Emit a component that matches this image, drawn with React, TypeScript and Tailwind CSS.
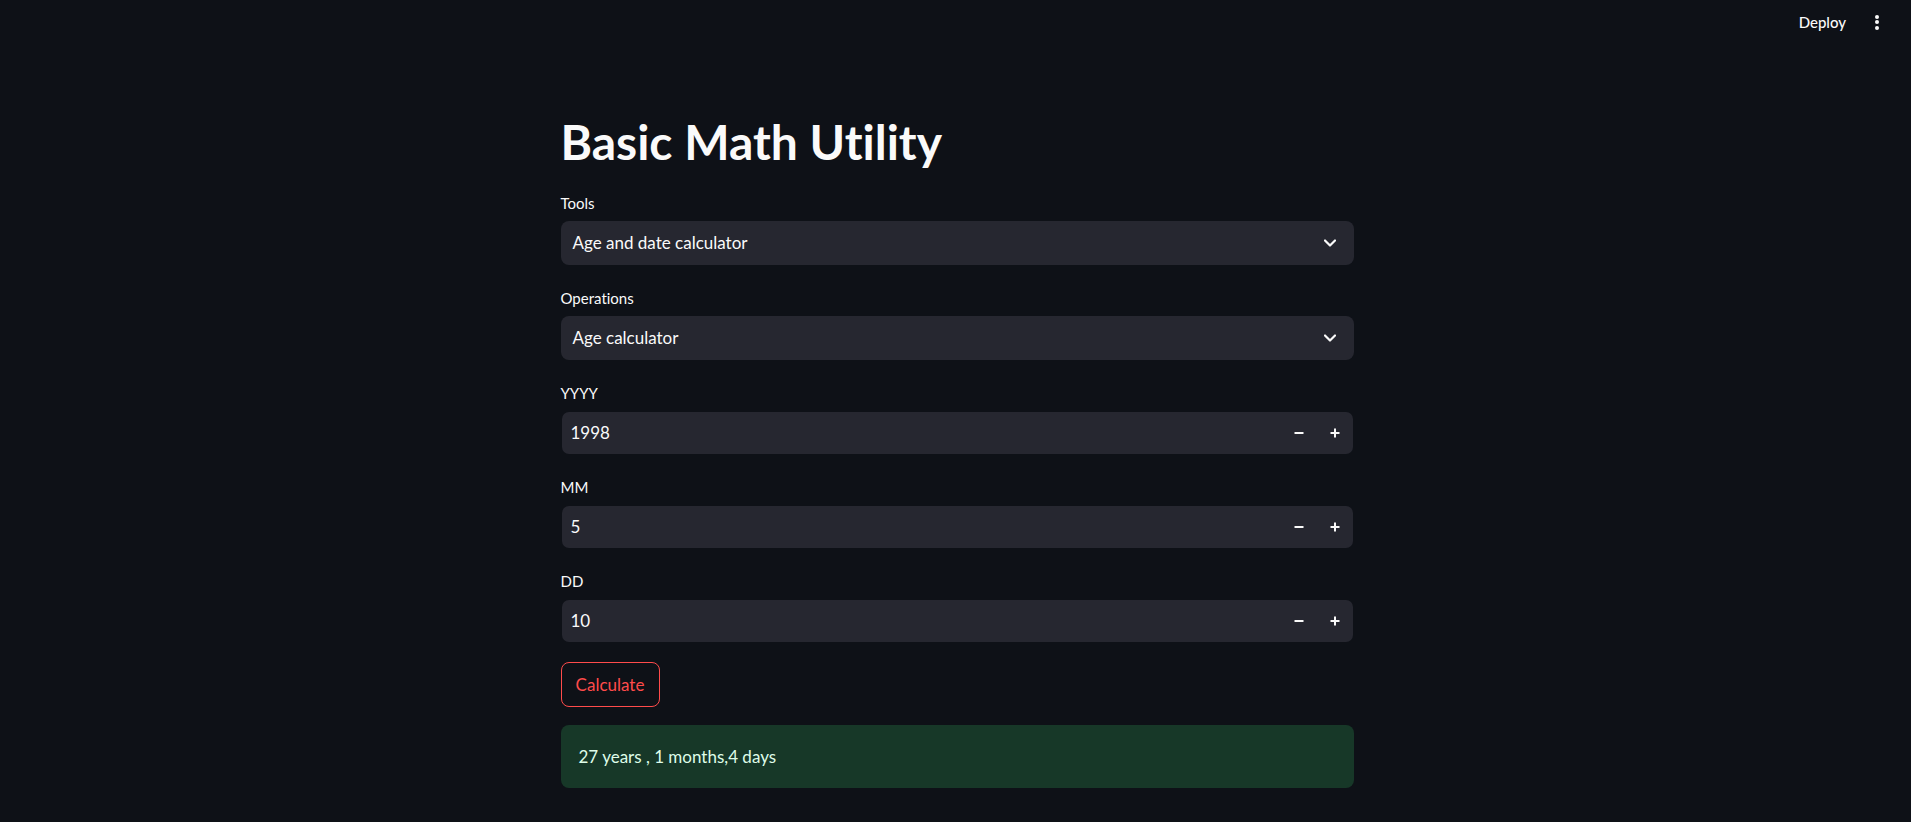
import React from 'react';

const font = { fontFamily: 'Lato, "Noto Sans", sans-serif' };

const Chevron = () => (
  <svg width="12" height="8" viewBox="0 0 12 8" fill="none">
    <polyline points="1,1.5 6,6.5 11,1.5" stroke="#fafafa" strokeWidth="2.2" strokeLinecap="round" strokeLinejoin="round" />
  </svg>
);

const Minus = () => (
  <svg width="10" height="10" viewBox="0 0 10 10">
    <rect x="0.5" y="4" width="9" height="2" fill="#fafafa" />
  </svg>
);

const Plus = () => (
  <svg width="10" height="10" viewBox="0 0 10 10">
    <rect x="0.5" y="4" width="9" height="2" fill="#fafafa" />
    <rect x="4" y="0.5" width="2" height="9" fill="#fafafa" />
  </svg>
);

const Label = ({ text }: { text: string }) => (
  <div className="h-[20px] mb-[8px] text-[15px] leading-[20px] text-[#fafafa]">{text}</div>
);

const SelectBox = ({ label, value }: { label: string; value: string }) => (
  <div className="mb-[23px]">
    <Label text={label} />
    <div className="h-[44px] rounded-[8px] bg-[#262730] flex items-center justify-between pl-[12px] pr-[18px]">
      <span className="text-[17px] text-[#fafafa]">{value}</span>
      <Chevron />
    </div>
  </div>
);

const NumberBox = ({ label, value, last }: { label: string; value: string; last?: boolean }) => (
  <div className={last ? 'mb-[19px]' : 'mb-[22px]'}>
    <Label text={label} />
    <div className="h-[44px] rounded-[8px] bg-[#262730] bg-clip-padding border border-transparent flex items-center pl-[9px]">
      <span className="flex-1 text-[17px] text-[#fafafa]">{value}</span>
      <button className="w-[36px] h-full flex items-center justify-center">
        <Minus />
      </button>
      <button className="w-[36px] h-full flex items-center justify-center">
        <Plus />
      </button>
    </div>
  </div>
);

export default function App() {
  return (
    <div className="min-h-screen bg-[#0e1117] text-[#fafafa] [font-variant-ligatures:none]" style={font}>
      <header className="h-[44px] flex items-center justify-end pr-[32px]">
        <span className="text-[15px] font-medium mr-[29px]">Deploy</span>
        <div className="flex flex-col gap-[1.5px]">
          <span className="w-[4px] h-[4px] rounded-full bg-[#fafafa]" />
          <span className="w-[4px] h-[4px] rounded-full bg-[#fafafa]" />
          <span className="w-[4px] h-[4px] rounded-full bg-[#fafafa]" />
        </div>
      </header>

      <main className="w-[796px] mx-auto pl-[3px] pt-[68px] pb-[34px]">
        <h1 className="text-[48px] leading-[60px] font-bold mb-[21px]">Basic Math Utility</h1>

        <SelectBox label="Tools" value="Age and date calculator" />
        <SelectBox label="Operations" value="Age calculator" />
        <NumberBox label="YYYY" value="1998" />
        <NumberBox label="MM" value="5" />
        <NumberBox label="DD" value="10" last />

        <button className="w-[99px] h-[45px] rounded-[8px] border border-[#ff4b4b] text-[#ff4b4b] text-[17px] mb-[18px]">
          Calculate
        </button>

        <div className="h-[63px] rounded-[8px] bg-[#173828] flex items-center px-[18px] text-[17px] text-[#dffde9]">
          27 years , 1 months,4 days
        </div>
      </main>
    </div>
  );
}
